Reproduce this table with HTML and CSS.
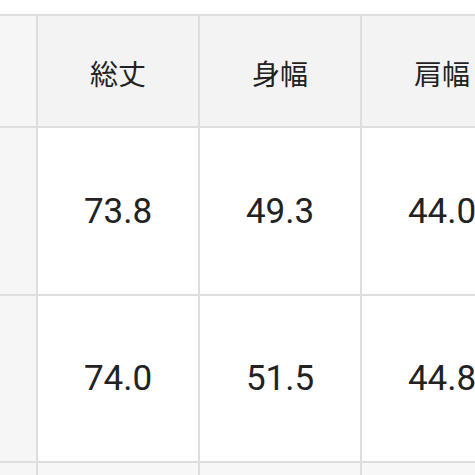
FILE: index.html
```html
<!DOCTYPE html>
<html lang="ja">
<head>
<meta charset="utf-8">
<link rel="stylesheet" href="styles.css">
</head>
<body>
<div class="table">
  <div class="cell head side"></div>
  <div class="cell head">総丈</div>
  <div class="cell head">身幅</div>
  <div class="cell head">肩幅</div>

  <div class="cell side"></div>
  <div class="cell num">73.8</div>
  <div class="cell num">49.3</div>
  <div class="cell num">44.0</div>

  <div class="cell side"></div>
  <div class="cell num">74.0</div>
  <div class="cell num">51.5</div>
  <div class="cell num">44.8</div>

  <div class="cell side"></div>
  <div class="cell next"></div>
  <div class="cell next"></div>
  <div class="cell next"></div>
</div>
</body>
</html>
```
FILE: styles.css
```css
html, body {
  margin: 0;
  padding: 0;
  overflow: hidden;
  background: #ffffff;
  width: 475px;
  height: 475px;
}
.table {
  margin-top: 14px;
  padding-top: 2px;
  display: grid;
  grid-template-columns: 36px 160px 160px 160px;
  grid-template-rows: 110px 166px 165px 60px;
  gap: 2px;
  background: #dedede;
  width: 522px;
  color: #222222;
}
.cell {
  background: #ffffff;
  display: flex;
  align-items: center;
  justify-content: center;
}
.head {
  background: #f3f3f3;
  font-family: "Noto Sans CJK JP", "Noto Sans", sans-serif;
  font-size: 28px;
  padding-top: 4px;
}
.side {
  background: #f6f6f6;
}
.num {
  font-family: Roboto, "Noto Sans", sans-serif;
  font-size: 35px;
}
.next {
  background: #f7f7f7;
}
```
